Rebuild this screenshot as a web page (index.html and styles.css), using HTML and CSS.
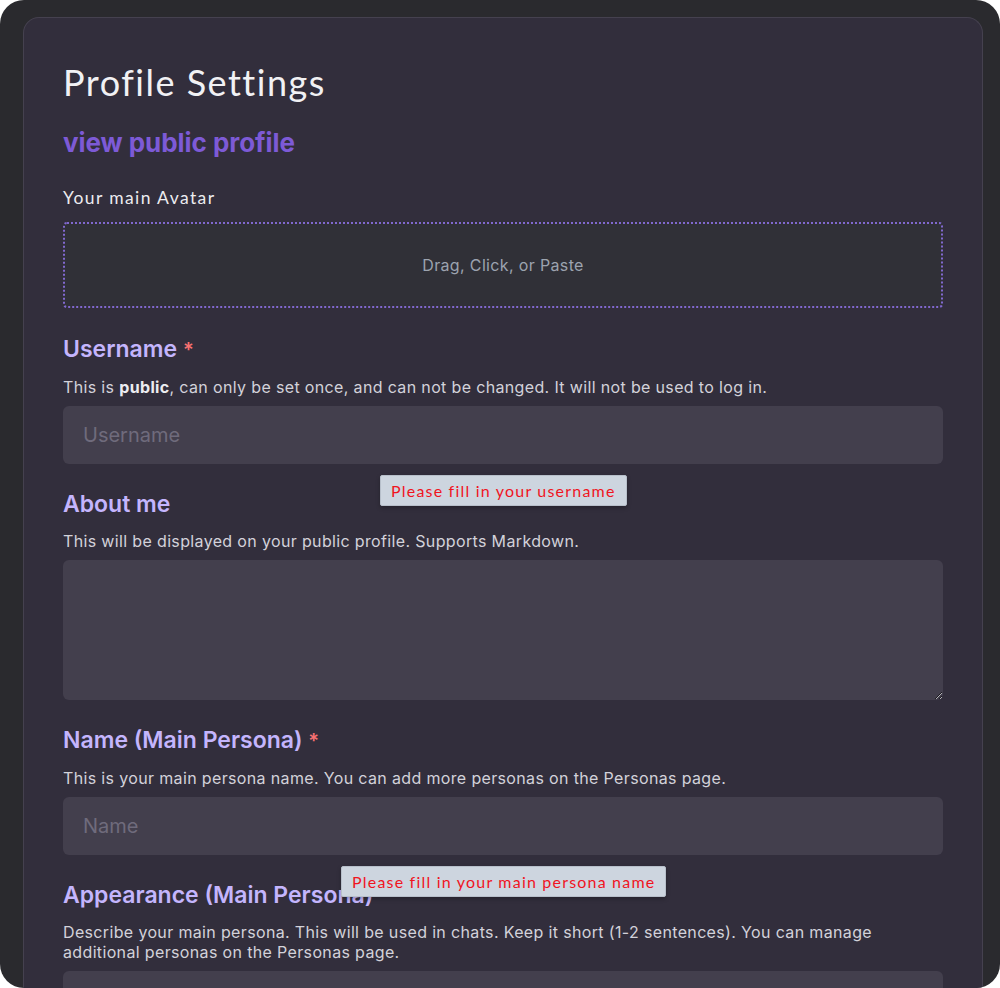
FILE: index.html
```html
<!DOCTYPE html>
<html lang="en">
<head>
    <meta charset="UTF-8">
    <meta name="viewport" content="width=device-width, initial-scale=1.0">
    <title>Profile Settings</title>
    <link rel="stylesheet" href="styles.css">
</head>
<body>
    <div class="app-frame">
        <main class="settings-card">
            <h1 class="page-title">Profile Settings</h1>
            <a class="public-link" href="#">view public profile</a>

            <div class="avatar-field">
                <div class="avatar-label">Your main Avatar</div>
                <div class="dropzone">Drag, Click, or Paste</div>
            </div>

            <!-- Username -->
            <div class="field">
                <label class="field-label" for="username">Username <span class="required">*</span></label>
                <p class="field-hint">This is <strong>public</strong>, can only be set once, and can not be changed. It will not be used to log in.</p>
                <div class="input-wrap">
                    <input class="text-input" id="username" type="text" placeholder="Username">
                    <div class="validation-bubble bubble-username">Please fill in your username</div>
                </div>
            </div>

            <!-- About -->
            <div class="field">
                <label class="field-label" for="about">About me</label>
                <p class="field-hint">This will be displayed on your public profile. Supports Markdown.</p>
                <textarea class="text-area" id="about"></textarea>
            </div>

            <!-- Persona name -->
            <div class="field">
                <label class="field-label" for="persona-name">Name (Main Persona) <span class="required">*</span></label>
                <p class="field-hint">This is your main persona name. You can add more personas on the Personas page.</p>
                <div class="input-wrap">
                    <input class="text-input" id="persona-name" type="text" placeholder="Name">
                    <div class="validation-bubble bubble-name">Please fill in your main persona name</div>
                </div>
            </div>

            <!-- Appearance -->
            <div class="field">
                <label class="field-label" for="appearance">Appearance (Main Persona)</label>
                <p class="field-hint">Describe your main persona. This will be used in chats. Keep it short (1-2 sentences). You can manage additional personas on the Personas page.</p>
                <textarea class="text-area" id="appearance"></textarea>
            </div>
        </main>
    </div>
</body>
</html>
```

FILE: styles.css
```css
:root {
    --frame-bg: #2a2a2e;
    --card-bg: #322e3c;
    --card-border: #45414f;
    --input-bg: #433f4d;
    --drop-bg: #303037;
    --label-purple: #c4b5fd;
    --link-purple: #7d5ad6;
    --hint: #d3d2da;
    --placeholder: #6f6b7c;
    --required: #f87171;
    --heading-font: 'Lato', 'Noto Sans', sans-serif;
    --body-font: 'Inter', 'Noto Sans', sans-serif;
}

* {
    box-sizing: border-box;
}

html,
body {
    margin: 0;
    height: 100%;
    background: #ffffff;
    overflow: hidden;
}

body {
    font-family: var(--body-font);
}

.app-frame {
    height: 100%;
    background: var(--frame-bg);
    border-radius: 24px;
    padding: 17px 17px 0 23px;
    overflow: hidden;
}

.settings-card {
    background: var(--card-bg);
    border: 1px solid var(--card-border);
    border-bottom: none;
    border-radius: 16px 16px 0 0;
    height: calc(100% + 40px);
    padding: 43px 39px 0 39px;
}

.page-title {
    font-family: var(--heading-font);
    font-weight: 400;
    font-size: 36px;
    line-height: 42px;
    letter-spacing: 1.5px;
    color: #f1f1f4;
    margin: 0 0 24px;
}

.public-link {
    display: block;
    font-size: 26px;
    font-weight: 700;
    line-height: 32px;
    letter-spacing: -0.05px;
    color: var(--link-purple);
    text-decoration: none;
    margin-bottom: 27px;
}

.avatar-field {
    margin-bottom: 27px;
}

.avatar-label {
    font-family: var(--heading-font);
    font-size: 17.5px;
    line-height: 24px;
    letter-spacing: 1.4px;
    color: #ececf0;
    margin-bottom: 12px;
}

.dropzone {
    height: 86px;
    border: 2px dotted #8168cf;
    border-radius: 4px;
    background: var(--drop-bg);
    display: flex;
    align-items: center;
    justify-content: center;
    font-size: 16px;
    letter-spacing: 0.35px;
    color: #9ca3af;
}

.field {
    margin-bottom: 26px;
}

.field-label {
    display: block;
    font-size: 23px;
    font-weight: 600;
    line-height: 28px;
    color: var(--label-purple);
}

.required {
    color: var(--required);
    font-size: 20px;
}

.field-hint {
    font-size: 16px;
    line-height: 20px;
    letter-spacing: 0.35px;
    color: var(--hint);
    margin: 13px 0 9px;
}

.field-hint strong {
    color: #ececf0;
    font-weight: 700;
}

.input-wrap {
    position: relative;
}

.text-input,
.text-area {
    display: block;
    width: 100%;
    background: var(--input-bg);
    border: none;
    border-radius: 6px;
    color: #ececf0;
    font-family: var(--body-font);
    font-size: 20px;
    outline: none;
}

.text-input {
    height: 58px;
    padding: 0 20px;
}

.text-input::placeholder {
    color: var(--placeholder);
}

.text-area {
    height: 140px;
    padding: 14px 20px;
    resize: vertical;
}

/* native-looking validation bubbles */
.validation-bubble {
    position: absolute;
    top: 69px;
    z-index: 2;
    background: #cdd5df;
    color: #f0141e;
    font-family: var(--heading-font);
    font-size: 16px;
    line-height: 29px;
    letter-spacing: 1.2px;
    padding: 0 10px;
    border: 1px solid #b7bfca;
    border-radius: 2px;
    box-shadow: 0 2px 4px rgba(0, 0, 0, 0.25);
    white-space: nowrap;
}

.bubble-username {
    left: 317px;
}

.bubble-name {
    left: 278px;
}
```
